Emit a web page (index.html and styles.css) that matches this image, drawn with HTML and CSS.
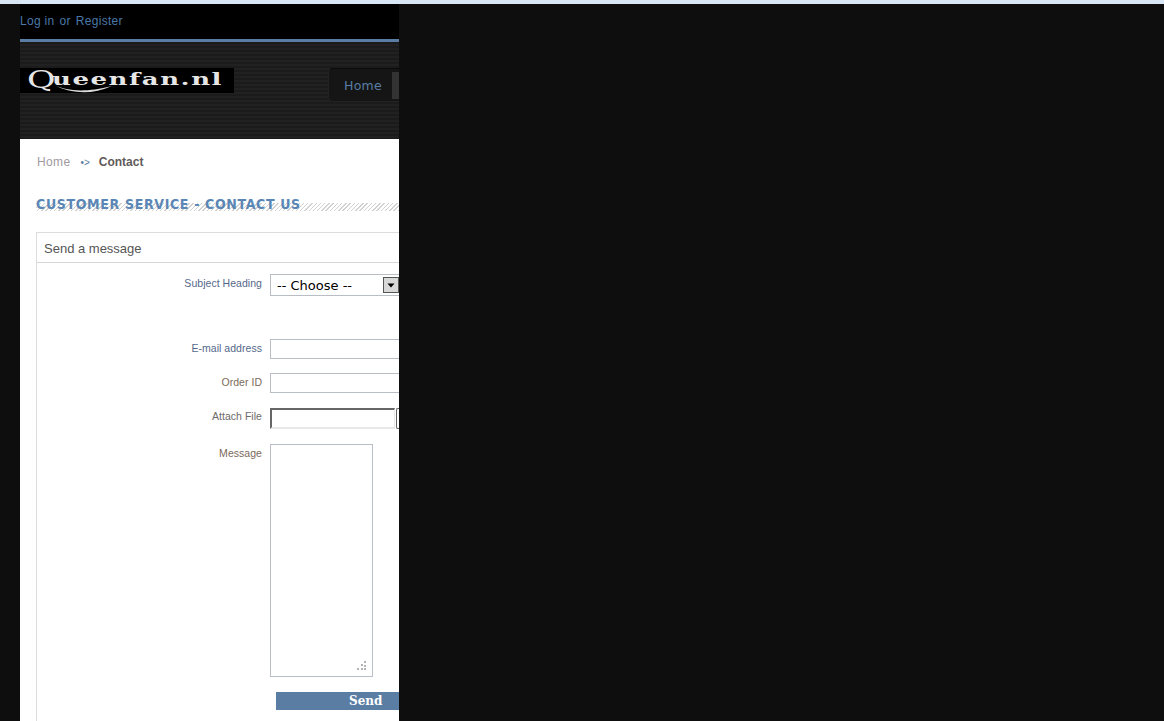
FILE: index.html
```html
<!DOCTYPE html>
<html lang="en">
<head>
<meta charset="utf-8">
<title>Contact</title>
<link rel="stylesheet" href="styles.css">
</head>
<body>
<div class="topline"></div>
<div class="page">
  <div class="userbar"><a>Log in</a><span class="or">or</span><a>Register</a></div>
  <header class="header">
    <div class="logo"><span class="logo-q">Q</span><span class="logo-text">ueenfan.nl</span>
      <svg class="logo-tail" width="70" height="12" viewBox="0 0 70 12"><path d="M12 2c14 6 30 8 58 1-20 9-40 8-58-1z" fill="#d8d8d8"/></svg></div>
    <nav class="nav"><span class="nav-home">Home</span><span class="nav-next"></span></nav>
  </header>
  <main class="content">
    <div class="crumbs"><span class="crumb-home">Home</span><span class="crumb-sep">•&gt;</span><b class="crumb-cur">Contact</b></div>
    <div class="title-row"><h1 class="title">CUSTOMER SERVICE - CONTACT US</h1></div>
    <section class="box">
      <h2 class="box-head">Send a message</h2>
      <form class="form">
        <div class="row row-subject"><label class="lab">Subject Heading</label>
          <div class="select"><span>-- Choose --</span><span class="arrow"><svg width="12" height="12" viewBox="0 0 12 12"><path d="M2.5 4.5h7L6 8.5z" fill="#000"/></svg></span></div></div>
        <div class="row row-mail"><label class="lab">E-mail address</label><div class="input"></div></div>
        <div class="row row-order"><label class="lab">Order ID</label><div class="input"></div></div>
        <div class="row row-file"><label class="lab">Attach File</label><div class="file"></div><div class="browse"></div></div>
        <div class="row row-msg"><label class="lab">Message</label>
          <div class="textarea"><svg class="grip" width="12" height="12" viewBox="0 0 12 12"><path d="M9 1h2v2H9zM6 4h2v2H6zM9 5h2v2H9zM2 8h2v2H2zM6 8h2v2H6zM9 8h2v2H9z" fill="#b4b4b4"/></svg></div></div>
        <div class="row-send"><div class="send">Send</div></div>
      </form>
    </section>
  </main>
</div>
</body>
</html>
```
FILE: styles.css
```css
* { box-sizing: border-box; }
html, body { margin: 0; height: 100%; overflow: hidden; }
body { background: #0e0e0e; font-family: "Liberation Sans", Arial, sans-serif; }
.topline { height: 4px; background: #d9e6f5; }
.page { width: 379px; height: 717px; margin-left: 20px; background: #fff; overflow: hidden; }
.userbar { height: 35px; background: #000; display: flex; align-items: center; gap: 5px; padding-bottom: 1px; font-size: 12px; letter-spacing: .3px; color: #4a78a8; }
.header { height: 100px; border-top: 3px solid #5a7da3; background: repeating-linear-gradient(#1b1b1b 0 2px, #212121 2px 4px); display: flex; align-items: flex-start; gap: 94px; padding-top: 26px; width: 379px; overflow: hidden; }
.logo { position: relative; flex: none; width: 214px; height: 25px; background: #000; color: #e6e6e6; font-family: "DejaVu Serif", serif; font-weight: 700; white-space: nowrap; }
.logo-q { position: absolute; left: 7px; top: 0; font-size: 24px; line-height: 24px; font-weight: 400; transform: scaleX(1.45); transform-origin: 0 0; }
.logo-text { position: absolute; left: 32px; top: 0; font-size: 17px; line-height: 23px; letter-spacing: 1px; transform: scaleX(1.53); transform-origin: 0 0; }
.logo-tail { position: absolute; left: 22px; top: 15px; }
.nav { flex: none; width: 71px; height: 34px; display: flex; align-items: center; background: #151515; border: 1px solid #222; border-top-color: #0a0a0a; border-right: 0; border-radius: 5px 0 0 5px; }
.nav-home { flex: none; width: 63px; text-align: center; padding-left: 5px; letter-spacing: .3px; color: #5a7da3; font-family: "DejaVu Sans", sans-serif; font-size: 12.5px; }
.nav-next { flex: none; width: 8px; height: 27px; background: #333; }
.content { padding: 0 0 0 16px; width: 379px; }
.crumbs { display: flex; align-items: center; height: 16px; margin-top: 15px; font-size: 12px; }
.crumb-home { color: #a09aa0; margin-left: 1px; letter-spacing: .35px; }
.crumb-sep { margin: 0 9px 0 10px; color: #5a7da3; font-size: 10px; }
.crumb-cur { color: #5f5a5a; }
.title-row { display: flex; align-items: center; height: 16px; margin-top: 26px; background: repeating-linear-gradient(135deg, #d2d2d2 0 1px, #fff 1px 3px) 0 7px / 100% 8px no-repeat; }
.title { margin: 0; flex: none; font-family: "DejaVu Sans Condensed", "DejaVu Sans", sans-serif; font-weight: 700; font-size: 14px; letter-spacing: .65px; color: #5a86b5; white-space: nowrap; }
.box { width: 400px; margin-top: 20px; border: 1px solid #dcdcdc; height: 520px; }
.box-head { margin: 0; height: 30px; padding-left: 7px; border-bottom: 1px solid #d6d6d6; font-weight: 400; font-size: 13px; line-height: 31px; color: #555; }
.form { display: block; }
.row { display: flex; align-items: flex-start; }
.lab { width: 225px; flex: none; text-align: right; font-size: 10.5px; letter-spacing: .04px; color: #6d6a6a; }
.row-subject { margin-top: 11px; height: 22px; }
.row-subject .lab { color: #56688a; padding-top: 3px; }
.select { margin-left: 8px; width: 130px; height: 22px; flex: none; border: 1px solid #b9bec6; display: flex; align-items: center; justify-content: space-between; padding: 0 0 0 6px; font-family: "DejaVu Sans", sans-serif; font-size: 13px; color: #000; }
.arrow { width: 16px; height: 16px; background: #d8d8d8; border: 1px solid #555; display: flex; align-items: center; justify-content: center; }
.input { margin-left: 8px; width: 140px; height: 20px; flex: none; border: 1px solid #b9bec6; }
.row-mail { margin-top: 43px; height: 20px; }
.row-mail .lab { color: #56688a; padding-top: 3px; }
.row-order { margin-top: 14px; height: 20px; }
.row-order .lab { color: #7a6a5a; padding-top: 3px; }
.row-file { margin-top: 15px; height: 21px; }
.row-file .lab { padding-top: 2px; }
.file { margin-left: 8px; width: 125px; height: 21px; flex: none; border: 2px solid #666; border-right: 1px solid #e8e8e8; border-bottom: 2px solid #e8e8e8; }
.browse { margin-left: 1px; width: 10px; height: 21px; flex: none; border: 1px solid #666; border-right: 0; border-radius: 2px 0 0 2px; }
.row-msg { margin-top: 15px; height: 233px; }
.row-msg .lab { color: #7a6a5a; padding-top: 3px; }
.textarea { margin-left: 8px; width: 103px; height: 233px; flex: none; border: 1px solid #b9bec6; display: flex; align-items: flex-end; justify-content: flex-end; padding: 0 5px 4px 0; }
.row-send { margin-top: 15px; padding-left: 239px; }
.send { width: 180px; height: 18px; background: #5a7da3; color: #fff; font-family: "DejaVu Serif", serif; font-weight: 700; font-size: 12px; line-height: 18px; padding-left: 73px; }
```
